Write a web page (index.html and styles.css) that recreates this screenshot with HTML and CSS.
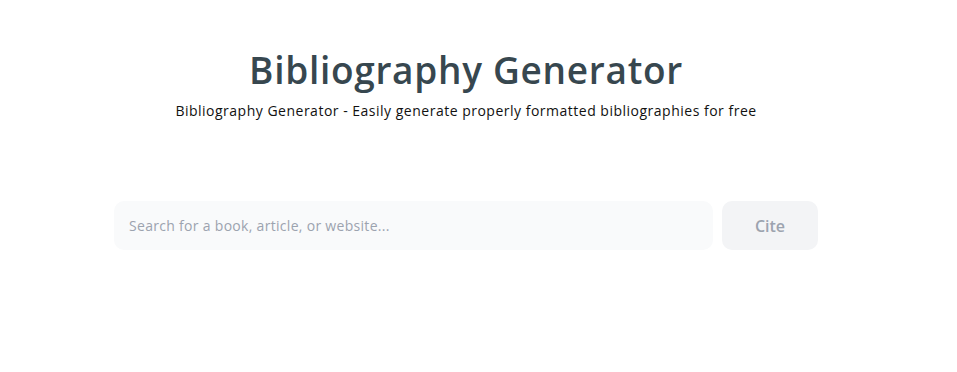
FILE: index.html
```html
<!DOCTYPE html>
<html lang="en">
<head>
    <meta charset="UTF-8">
    <meta name="viewport" content="width=device-width, initial-scale=1.0">
    <title>Bibliography Generator</title>
    <link rel="stylesheet" href="styles.css">
</head>
<body>

    <!-- Header -->
    <div class="header">
        <h1>Bibliography Generator</h1>
        <p>Bibliography Generator - Easily generate properly formatted bibliographies for free</p>
    </div>

    <!-- Search -->
    <div class="search-box">
        <input type="text" class="search-input" placeholder="Search for a book, article, or website...">
        <button class="cite-button">Cite</button>
    </div>

</body>
</html>
```

FILE: styles.css
```css
body {
    font-family: "Open Sans", "Noto Sans", sans-serif;
    background-color: #fff;
    margin: 0;
    padding: 0;
}
.header {
    width: 704px;
    margin: 0 0 0 114px;
    padding-top: 46px;
    text-align: center;
}
.header h1 {
    margin: 0;
    font-size: 37px;
    line-height: 48px;
    font-weight: 600;
    color: #37474f;
    letter-spacing: 0.7px;
}
.header p {
    margin: 7px 0 0;
    font-size: 14px;
    line-height: 20px;
    color: #111;
    letter-spacing: 0.5px;
}
.search-box {
    width: 704px;
    margin: 80px 0 0 114px;
    display: flex;
    gap: 9px;
}
.search-input {
    flex: 1;
    height: 49px;
    box-sizing: border-box;
    padding: 0 15px;
    border: none;
    border-radius: 10px;
    background-color: #f9fafb;
    font-family: inherit;
    font-size: 14px;
    letter-spacing: 0.3px;
    color: #333;
    outline: none;
}
.search-input::placeholder {
    color: #9ca3af;
}
.cite-button {
    width: 96px;
    height: 49px;
    border: none;
    border-radius: 10px;
    background-color: #f3f4f6;
    color: #9ca3af;
    font-family: inherit;
    font-size: 16px;
    font-weight: 600;
    cursor: pointer;
}
```
